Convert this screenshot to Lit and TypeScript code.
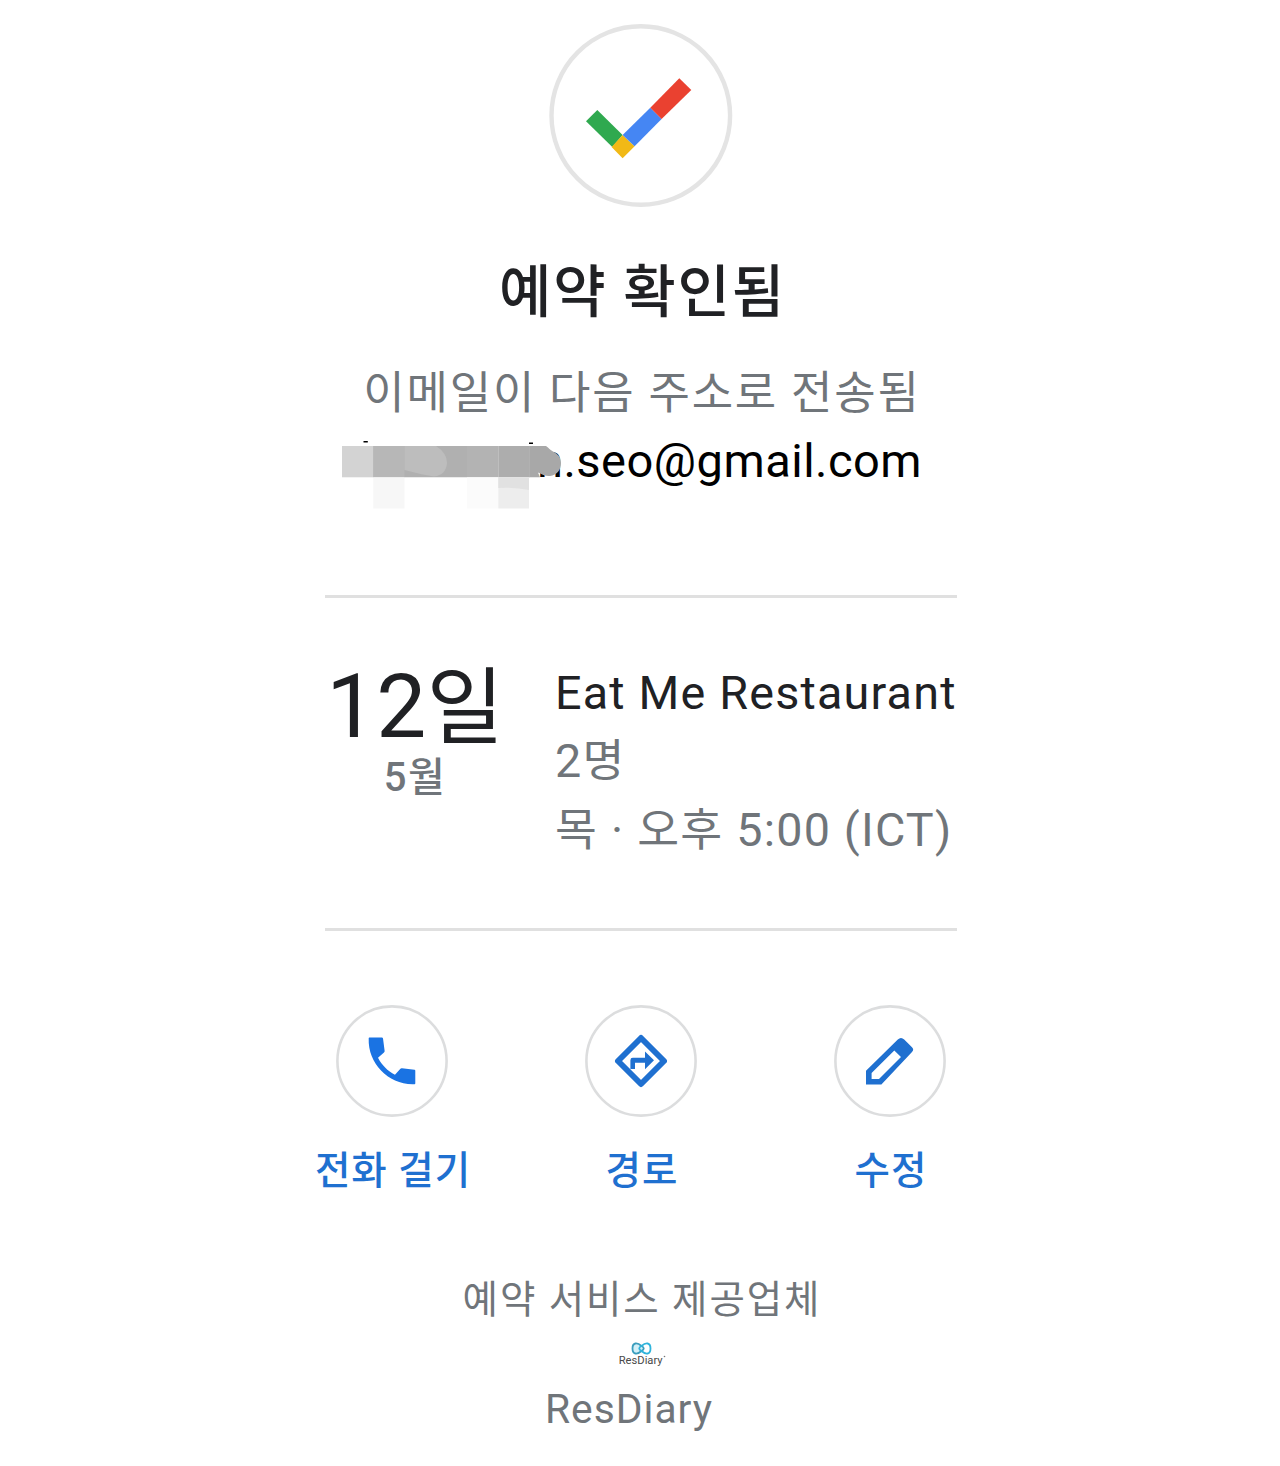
import { LitElement, html, svg, css, type TemplateResult } from "lit";
import { customElement, property } from "lit/decorators.js";

/** Wraps each Hangul run so it can be sized apart from the Latin text around it. */
function mixed(text: string): TemplateResult {
  const runs = text.split(/([\uac00-\ud7a3]+)/).filter((r) => r !== "");
  return html`${runs.map((r) => (/[\uac00-\ud7a3]/.test(r) ? html`<span class="ko">${r}</span>` : r))}`;
}

const icons = {
  call: svg`<path transform="translate(24.9 24.8) scale(2.59)" d="M20.7 15.42l-4.85-.57c-.3-.03-.5.05-.68.25l-2.02 2.22c-2.83-1.44-5.1-3.7-6.54-6.54l2.3-2.03c.22-.2.28-.42.25-.7L8.54 3.35C8.5 3.1 8.3 3 8.1 3H3.4c-.25 0-.4.15-.39.4C2.65 13.18 10.82 21.4 20.6 21c.25 0 .4-.15.4-.4v-4.8c0-.2-.1-.35-.3-.38z"/>`,
  route: svg`<path d="M56 33L79 56L56 79L33 56Z" fill="none" stroke="currentColor" stroke-width="5.9" stroke-linejoin="round"/>
    <path d="M45.4 64V55.2q0-2.4 2.4-2.4H60V46.4L69 55.3L60 64.2V57.7H50V64Z"/>`,
  edit: svg`<path fill-rule="evenodd" d="M32 65.7L63.8 34.4Q67 31.4 70.2 34.4L78 42.2Q80.4 44.6 78 47L47.4 79.5H32ZM37.6 68V74H45L67 52L60.3 45.4Z"/>`,
};

@customElement("action-button")
class ActionButton extends LitElement {
  @property() label = "";
  @property() icon: keyof typeof icons = "call";

  static styles = css`
    :host { display: flex; flex-direction: column; align-items: center; width: 200px; color: #1f70d0; }
    .ring { display: block; width: 112px; height: 112px; fill: currentColor; }
    .ring.call { color: #1a73e3; }
    .label { margin-top: 30px; padding-left: 2px; font-size: 38.5px; line-height: 48px; font-weight: 500; letter-spacing: 1px; white-space: nowrap; }
  `;

  render() {
    return html`<svg class="ring ${this.icon}" viewBox="0 0 112 112">
        <circle cx="56" cy="56" r="54.6" fill="none" stroke="#dcddde" stroke-width="2.6" />
        ${icons[this.icon]}
      </svg>
      <div class="label">${this.label}</div>`;
  }
}

@customElement("app-root")
class AppRoot extends LitElement {
  static styles = css`
    :host { display: block; background: #fff; color: #202124; font-family: Roboto, "Noto Sans CJK KR", sans-serif; }
    .page { box-sizing: border-box; height: 1466px; padding: 24px 0 0 2px; display: flex; flex-direction: column; align-items: center; overflow: hidden; white-space: nowrap; }
    .check { display: block; width: 184px; height: 183px; }
    h1 { margin: 52px 0 0; padding-left: 3px; font-size: 57px; line-height: 68px; font-weight: 500; letter-spacing: 1.8px; }
    .sub { margin-top: 35px; padding-left: 2px; font-size: 45px; line-height: 64px; letter-spacing: 1.8px; color: #70757a; }
    .email { margin-top: 3px; position: relative; width: 598px; display: flex; justify-content: flex-end; color: #000; font-size: 47px; line-height: 64px; letter-spacing: 0.5px; }
    .address { width: 403px; }
    .redaction { position: absolute; left: -2px; top: 8px; width: 240px; height: 76px; }
    .details { margin-top: 102px; box-sizing: border-box; width: 632px; height: 336px; padding-top: 61px; border-top: 3px solid #e0e0e0; border-bottom: 3px solid #e0e0e0; display: flex; gap: 52px; }
    .date { width: 178px; display: flex; flex-direction: column; align-items: center; }
    .day { margin-top: 3px; padding-left: 2px; font-size: 89px; line-height: 90px; }
    .day .ko { font-size: 84px; }
    .month { margin-top: -1px; padding-left: 2px; font-size: 40px; line-height: 50px; font-weight: 500; letter-spacing: 1.4px; color: #70757a; }
    .info { font-size: 46.7px; line-height: 68.3px; letter-spacing: 1.2px; color: #70757a; }
    .info .ko { font-size: 45.5px; line-height: 1; letter-spacing: 1.3px; }
    .name { color: #202124; }
    .actions { margin-top: 74px; display: flex; gap: 49px; }
    .provider { margin-top: 81px; padding-left: 2px; font-size: 38.5px; line-height: 48px; letter-spacing: 1.9px; color: #70757a; }
    .logo { display: block; width: 60px; height: 40px; margin-top: 11px; }
    .brand { margin-top: 10px; padding-right: 24px; font-size: 40.8px; line-height: 48px; letter-spacing: 1px; color: #70757a; }
  `;

  render() {
    return html`<main class="page">
      <svg class="check" viewBox="-0.3 0 184 183">
        <circle cx="91.5" cy="91.5" r="89.3" fill="none" stroke="#e4e4e4" stroke-width="4.4" />
        <path fill="#2fa94f" d="M36.7 97.3L48 86L73.3 111L63 123Z" />
        <path fill="#f1b916" d="M73.3 111L85.3 122.3L73.3 134.3L62.3 123Z" />
        <path fill="#4586f3" d="M73.3 111L101 83.7L112.3 95L85.3 122.3Z" />
        <path fill="#ea4130" d="M101 83.7L130 54.3L142 66L112.3 95Z" />
      </svg>
      <h1>예약 확인됨</h1>
      <div class="sub">이메일이 다음 주소로 전송됨</div>
      <div class="email">
        <span class="address">n.seo@gmail.com</span>
        <svg class="redaction" viewBox="340 437 240 76">
          <path fill="#fff" d="M532 446h8v28h-8z" />
          <path fill="#000" d="M363.5 441h4.3v1.6h-4.3zM529 442.6h4v1.4h-4z" />
          <path fill="#d3d3d3" d="M342 446h31.3v31.3H342z" />
          <path fill="#b0b0b0" d="M373.3 446H467v31.3h-93.7z" />
          <path fill="#b7b7b7" d="M373.3 446h31.2v31.3h-31.2z" />
          <path fill="#bdbdbd" d="M404.5 446H436Q447 453 447 463Q446 475 434 476.5Q424 475 404.5 470Z" />
          <path fill="#b3b3b3" d="M467 446h31.3v31.3H467z" />
          <path fill="#adadad" d="M498.3 446H529.5v31.3h-31.2z" />
          <path fill="#a8a8a8" d="M529.2 446H546C549 448 550 450 553 451.500C558.500 454 561 458 561 463C561 470 557 475 550 476C546 476.500 542 474.500 538 472.500L540 477.300H529.200Z" />
          <path fill="#f7f7f7" d="M373.3 477.3h31.2v31.2h-31.2z" />
          <path fill="#fbfbfb" d="M467 477.3h31.3v31.2H467z" />
          <path fill="#ededed" d="M498.3 477.3h30.7v31.2h-30.7z" />
          <path fill="#e1e1e1" d="M498.3 477.3h30.7V490Q514 487 498.3 488Z" />
        </svg>
      </div>
      <section class="details">
        <div class="date">
          <div class="day">${mixed("12일")}</div>
          <div class="month">5월</div>
        </div>
        <div class="info">
          <div class="name">Eat Me Restaurant</div>
          <div>${mixed("2명")}</div>
          <div>${mixed("목 · 오후 5:00 (ICT)")}</div>
        </div>
      </section>
      <nav class="actions">
        <action-button icon="call" label="전화 걸기"></action-button>
        <action-button icon="route" label="경로"></action-button>
        <action-button icon="edit" label="수정"></action-button>
      </nav>
      <div class="provider">예약 서비스 제공업체</div>
      <svg class="logo" viewBox="611 1336 60 40">
        <g fill="#d3eff7" stroke-width="1.8">
          <path stroke="#3a9dbd" d="M641.5 1347C637 1343 632.5 1343.5 632.5 1349.5S637 1356 641.5 1352C644.5 1350.5 644.5 1348.5 641.5 1347Z" />
          <path stroke="#2fb4dc" fill="none" d="M641.5 1347C646 1343 650.5 1343.5 650.5 1349.5S646 1356 641.5 1352C638.5 1350.5 638.5 1348.5 641.5 1347Z" />
        </g>
        <text x="618.7" y="1364.6" font-size="11.2" fill="#4a4a4a">ResDiary</text>
        <circle cx="664.5" cy="1357.5" r="0.8" fill="#777" />
      </svg>
      <div class="brand">ResDiary</div>
    </main>`;
  }
}
